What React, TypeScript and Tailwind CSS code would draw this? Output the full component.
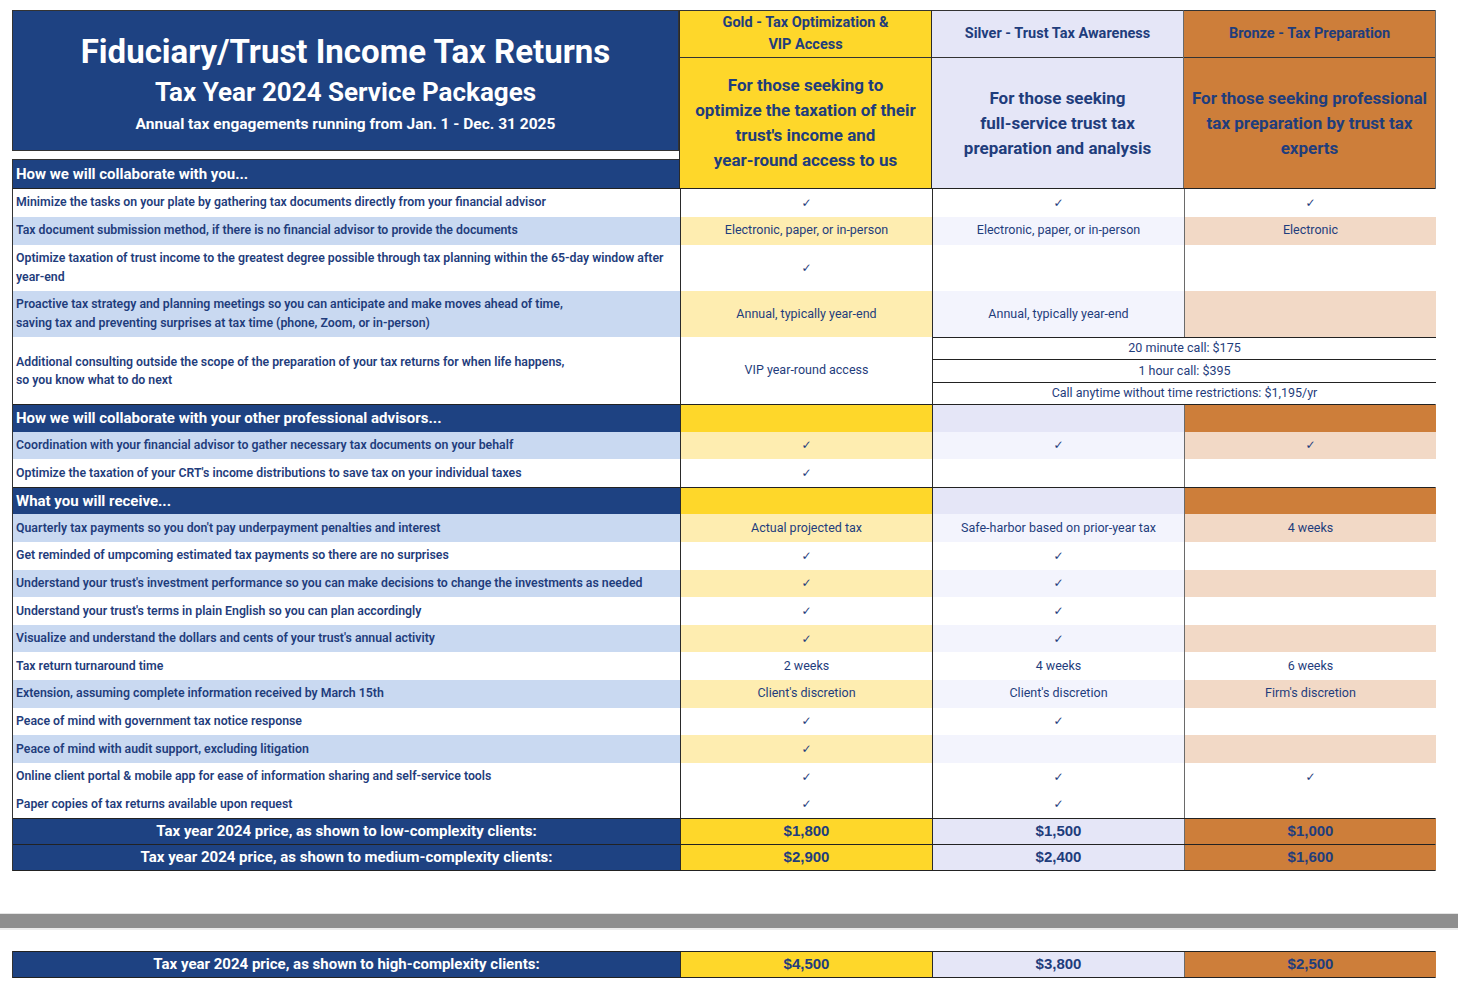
const NAVY = "bg-[#1e4282]";
const TXT = "text-[#1f3d7c]";

const tiers = [
  { head: "bg-[#fed72a]", light: "bg-[#feedb0]", line: "border-[#2a2a2a]" },
  { head: "bg-[#e5e6f7]", light: "bg-[#f3f4fd]", line: "border-[#2a2a2a]" },
  { head: "bg-[#cd7e3a]", light: "bg-[#f2d9c6]", line: "border-[#6a6a6a]" },
];

const GRID = "grid grid-cols-[667px_252px_252px_252px]";
const CHECK = "✓";

type Row = {
  label: React.ReactNode;
  cells: string[];
  shade: boolean;
  h?: string;
};

function Check() {
  return <span className="font-['DejaVu_Sans',sans-serif] text-[12px]">{CHECK}</span>;
}

function Cell({ value }: { value: string }) {
  if (value === CHECK) return <Check />;
  return <span>{value}</span>;
}

function BodyRow({ row }: { row: Row }) {
  const h = row.h ?? "h-[27.6px]";
  return (
    <div className={`${GRID} ${h}`}>
      <div
        className={`flex items-center px-[3px] text-[12.3px] font-semibold leading-[19px] ${
          row.shade ? "bg-[#c9d9f1]" : "bg-white"
        }`}
      >
        <div>{row.label}</div>
      </div>
      {tiers.map((t, i) => (
        <div
          key={i}
          className={`flex items-center justify-center border-l ${t.line} text-[12.5px] ${
            row.shade ? t.light : "bg-white"
          }`}
        >
          <Cell value={row.cells[i] ?? ""} />
        </div>
      ))}
    </div>
  );
}

function SectionRow({ title }: { title: string }) {
  return (
    <div className={`${GRID} h-[27.6px] border-t border-[#222]`}>
      <div className={`${NAVY} flex items-center px-[3px] text-white text-[15px] font-bold`}>{title}</div>
      {tiers.map((t, i) => (
        <div key={i} className={`${t.head} border-l ${t.line}`} />
      ))}
    </div>
  );
}

function PriceRow({ label, prices, top }: { label: string; prices: string[]; top?: boolean }) {
  return (
    <div className={`${GRID} h-[26.5px] ${top ? "border-t" : ""} border-b border-[#222]`}>
      <div className={`${NAVY} flex items-center justify-center text-white text-[15px] font-bold`}>{label}</div>
      {tiers.map((t, i) => (
        <div
          key={i}
          className={`${t.head} border-l ${t.line} flex items-center justify-center font-['Liberation_Sans',Arial,sans-serif] font-bold text-[15px] ${TXT}`}
        >
          {prices[i]}
        </div>
      ))}
    </div>
  );
}

const group1: Row[] = [
  {
    label: "Minimize the tasks on your plate by gathering tax documents directly from your financial advisor",
    cells: [CHECK, CHECK, CHECK],
    shade: false,
  },
  {
    label: "Tax document submission method, if there is no financial advisor to provide the documents",
    cells: ["Electronic, paper, or in-person", "Electronic, paper, or in-person", "Electronic"],
    shade: true,
    h: "h-[28.5px]",
  },
  {
    label: (
      <>
        Optimize taxation of trust income to the greatest degree possible through tax planning within the 65-day window after
        <br />
        year-end
      </>
    ),
    cells: [CHECK, "", ""],
    shade: false,
    h: "h-[46px]",
  },
  {
    label: (
      <>
        Proactive tax strategy and planning meetings so you can anticipate and make moves ahead of time,
        <br />
        saving tax and preventing surprises at tax time (phone, Zoom, or in-person)
      </>
    ),
    cells: ["Annual, typically year-end", "Annual, typically year-end", ""],
    shade: true,
    h: "h-[46px]",
  },
];

const group2: Row[] = [
  {
    label: "Coordination with your financial advisor to gather necessary tax documents on your behalf",
    cells: [CHECK, CHECK, CHECK],
    shade: true,
  },
  {
    label: "Optimize the taxation of your CRT's income distributions to save tax on your individual taxes",
    cells: [CHECK, "", ""],
    shade: false,
  },
];

const group3: Row[] = [
  {
    label: "Quarterly tax payments so you don't pay underpayment penalties and interest",
    cells: ["Actual projected tax", "Safe-harbor based on prior-year tax", "4 weeks"],
    shade: true,
  },
  { label: "Get reminded of umpcoming estimated tax payments so there are no surprises", cells: [CHECK, CHECK, ""], shade: false },
  {
    label: "Understand your trust's investment performance so you can make decisions to change the investments as needed",
    cells: [CHECK, CHECK, ""],
    shade: true,
  },
  { label: "Understand your trust's terms in plain English so you can plan accordingly", cells: [CHECK, CHECK, ""], shade: false },
  { label: "Visualize and understand the dollars and cents of your trust's annual activity", cells: [CHECK, CHECK, ""], shade: true },
  { label: "Tax return turnaround time", cells: ["2 weeks", "4 weeks", "6 weeks"], shade: false },
  {
    label: "Extension, assuming complete information received by March 15th",
    cells: ["Client's discretion", "Client's discretion", "Firm's discretion"],
    shade: true,
  },
  { label: "Peace of mind with government tax notice response", cells: [CHECK, CHECK, ""], shade: false },
  { label: "Peace of mind with audit support, excluding litigation", cells: [CHECK, "", ""], shade: true },
  {
    label: "Online client portal & mobile app for ease of information sharing and self-service tools",
    cells: [CHECK, CHECK, CHECK],
    shade: false,
  },
  { label: "Paper copies of tax returns available upon request", cells: [CHECK, CHECK, ""], shade: false },
];

export default function App() {
  return (
    <div className={`min-h-screen bg-white font-['Roboto',sans-serif] ${TXT}`}>
      <div className="pt-[10px] pl-[12px]">
        <div className="w-[1424px] border-r border-[#6a6a6a]">
          {/* Header */}
          <div className="flex">
            <div className="w-[667px] flex flex-col">
              <div className={`${NAVY} h-[141px] border border-[#333] flex flex-col items-center justify-center pt-[6px] text-white font-bold`}>
                <div className="text-[33px] leading-[40px]">Fiduciary/Trust Income Tax Returns</div>
                <div className="text-[26px] leading-[32px] mt-[4px]">Tax Year 2024 Service Packages</div>
                <div className="text-[15.5px] leading-[22px] mt-[5px]">
                  Annual tax engagements running from Jan. 1 - Dec. 31 2025
                </div>
              </div>
              <div className="h-[8px] bg-white" />
              <div className={`${NAVY} h-[29px] border-t border-l border-[#333] flex items-center px-[3px] text-white text-[15px] font-bold`}>
                How we will collaborate with you...
              </div>
            </div>
            {[
              {
                name: (
                  <>
                    Gold - Tax Optimization &amp;
                    <br />
                    VIP Access
                  </>
                ),
                desc: (
                  <>
                    For those seeking to
                    <br />
                    optimize the taxation of their
                    <br />
                    trust's income and
                    <br />
                    year-round access to us
                  </>
                ),
              },
              {
                name: "Silver - Trust Tax Awareness",
                desc: (
                  <>
                    For those seeking
                    <br />
                    full-service trust tax
                    <br />
                    preparation and analysis
                  </>
                ),
              },
              {
                name: "Bronze - Tax Preparation",
                desc: (
                  <>
                    For those seeking professional
                    <br />
                    tax preparation by trust tax
                    <br />
                    experts
                  </>
                ),
              },
            ].map((c, i) => (
              <div key={i} className={`w-[252px] flex flex-col border-l border-t ${tiers[i].line} border-t-[#333] ${tiers[i].head}`}>
                <div className="h-[47px] flex items-center justify-center text-center text-[14.5px] font-bold leading-[22px] border-b border-[#333]">
                  <div>{c.name}</div>
                </div>
                <div className="flex-1 flex items-center justify-center text-center text-[17px] font-bold leading-[25px]">
                  <div>{c.desc}</div>
                </div>
              </div>
            ))}
          </div>

          {/* Body */}
          <div className="border-l border-[#333] border-t border-t-[#222]">
            {group1.map((r, i) => (
              <BodyRow key={i} row={r} />
            ))}
            <div className={`${GRID} h-[67px]`}>
              <div className="flex items-center px-[3px] text-[12.3px] font-semibold leading-[18px] bg-white">
                <div>
                  Additional consulting outside the scope of the preparation of your tax returns for when life happens,
                  <br />
                  so you know what to do next
                </div>
              </div>
              <div className="flex items-center justify-center border-l border-[#2a2a2a] text-[12.5px] bg-white">
                VIP year-round access
              </div>
              <div className="col-span-2 flex flex-col border-l border-[#2a2a2a] text-[12.5px] bg-white">
                {["20 minute call: $175", "1 hour call: $395", "Call anytime without time restrictions: $1,195/yr"].map((t) => (
                  <div key={t} className="flex-1 flex items-center justify-center border-t border-[#222]">
                    {t}
                  </div>
                ))}
              </div>
            </div>
            <SectionRow title="How we will collaborate with your other professional advisors..." />
            {group2.map((r, i) => (
              <BodyRow key={i} row={r} />
            ))}
            <SectionRow title="What you will receive..." />
            {group3.map((r, i) => (
              <BodyRow key={i} row={r} />
            ))}
            <PriceRow label="Tax year 2024 price, as shown to low-complexity clients:" prices={["$1,800", "$1,500", "$1,000"]} top />
            <PriceRow label="Tax year 2024 price, as shown to medium-complexity clients:" prices={["$2,900", "$2,400", "$1,600"]} />
          </div>
        </div>
      </div>

      {/* page break bar */}
      <div className="mt-[42px] border-t border-[#e4e4e4] h-[17px] bg-[#8f8f8f] border-b-[2px] border-b-[#ececec]" />

      <div className="pt-[21px] pl-[12px]">
        <div className="w-[1424px] border-l border-r border-[#333] border-r-[#6a6a6a]">
          <PriceRow label="Tax year 2024 price, as shown to high-complexity clients:" prices={["$4,500", "$3,800", "$2,500"]} top />
        </div>
      </div>
    </div>
  );
}
